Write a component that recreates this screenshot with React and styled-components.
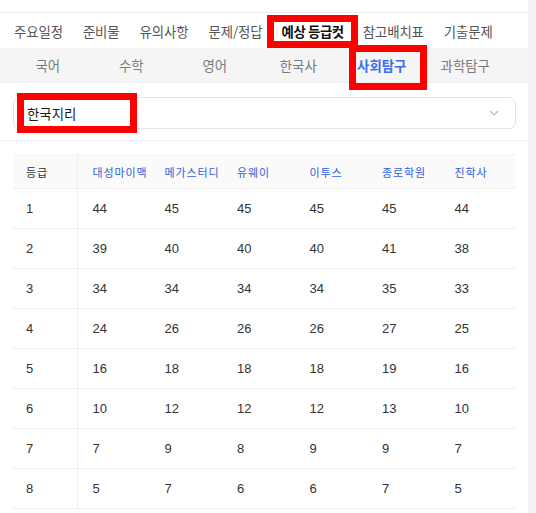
import React from 'react';
import styled, { createGlobalStyle } from 'styled-components';

const GlobalStyle = createGlobalStyle`
  html, body {
    margin: 0;
    padding: 0;
    background: #f1f2f6;
  }
  * {
    box-sizing: border-box;
  }
`;

const mainTabs = ['주요일정', '준비물', '유의사항', '문제/정답', '예상 등급컷', '참고배치표', '기출문제'];
const subTabs = ['국어', '수학', '영어', '한국사', '사회탐구', '과학탐구'];
const academies = ['대성마이맥', '메가스터디', '유웨이', '이투스', '종로학원', '진학사'];
const cuts = [
  [44, 45, 45, 45, 45, 44],
  [39, 40, 40, 40, 41, 38],
  [34, 34, 34, 34, 35, 33],
  [24, 26, 26, 26, 27, 25],
  [16, 18, 18, 18, 19, 16],
  [10, 12, 12, 12, 13, 10],
  [7, 9, 8, 9, 9, 7],
  [5, 7, 6, 6, 7, 5],
];

const App = () => {
  return (
    <Page>
      <GlobalStyle />
      <Main>
        <MainTabBar>
          {mainTabs.map((t) => (
            <MainTab key={t} $active={t === '예상 등급컷'}>
              {t}
              {t === '예상 등급컷' && <Mark $top={2} $bottom={0} $left={-5} $right={-5} />}
            </MainTab>
          ))}
        </MainTabBar>
        <SubTabBar>
          {subTabs.map((t) => (
            <SubTab key={t} $active={t === '사회탐구'}>
              <SubLabel>
                {t}
                {t === '사회탐구' && <Mark $top={-10} $bottom={-15} $left={-8} $right={-21} />}
              </SubLabel>
            </SubTab>
          ))}
        </SubTabBar>
        <SelectArea>
          <Select>
            <SelectValue>
              한국지리
              <Mark $top={-10} $bottom={-10} $left={-10} $right={-61} />
            </SelectValue>
            <Chevron width="10" height="6" viewBox="0 0 10 6">
              <path d="M1 1l4 4 4-4" fill="none" stroke="#b8b8b8" strokeWidth="1.1" />
            </Chevron>
          </Select>
        </SelectArea>
        <TableArea>
          <Table>
            <colgroup>
              <col style={{ width: 64 }} />
              <col style={{ width: 72.5 }} />
              <col style={{ width: 72.5 }} />
              <col style={{ width: 72.5 }} />
              <col style={{ width: 72.5 }} />
              <col style={{ width: 72.5 }} />
              <col />
            </colgroup>
            <thead>
              <tr>
                <HeadCell $first>등급</HeadCell>
                {academies.map((a) => (
                  <HeadCell key={a}>{a}</HeadCell>
                ))}
              </tr>
            </thead>
            <tbody>
              {cuts.map((row, i) => (
                <tr key={i}>
                  <Cell $first>{i + 1}</Cell>
                  {row.map((v, j) => (
                    <Cell key={j}>{v}</Cell>
                  ))}
                </tr>
              ))}
            </tbody>
          </Table>
        </TableArea>
      </Main>
    </Page>
  );
};

const Page = styled.div`
  display: flex;
  min-height: 513px;
  background: #f1f2f6;
`;

const Main = styled.div`
  width: 528px;
  background: #ffffff;
  padding-top: 12px;
  font-family: 'Noto Sans CJK KR', 'Noto Sans', sans-serif;
`;

const MainTabBar = styled.div`
  display: flex;
  align-items: center;
  height: 36px;
  padding-left: 4px;
  border-top: 1px solid #ececec;
`;

const MainTab = styled.div`
  position: relative;
  display: flex;
  align-items: center;
  height: 100%;
  padding: 0 ${(p) => (p.$active ? 9 : 10)}px;
  font-size: 13.4px;
  font-weight: ${(p) => (p.$active ? 700 : 400)};
  letter-spacing: ${(p) => (p.$active ? '-0.4px' : '-0.1px')};
  color: ${(p) => (p.$active ? '#111111' : '#555555')};
  white-space: nowrap;
`;

const Mark = styled.span`
  position: absolute;
  top: ${(p) => p.$top}px;
  bottom: ${(p) => p.$bottom}px;
  left: ${(p) => p.$left}px;
  right: ${(p) => p.$right}px;
  border: 7px solid #ff0000;
  pointer-events: none;
`;

const SubTabBar = styled.div`
  display: grid;
  grid-template-columns: repeat(6, 83.5px);
  height: 35px;
  padding-left: 6px;
  background: #f5f5f5;
  border-bottom: 1px solid #ededed;
`;

const SubTab = styled.div`
  display: flex;
  align-items: center;
  justify-content: center;
  font-size: 13.4px;
  font-weight: ${(p) => (p.$active ? 700 : 400)};
  color: ${(p) => (p.$active ? '#3b6cf2' : '#7a7a7a')};
`;

const SubLabel = styled.span`
  position: relative;
`;

const SelectArea = styled.div`
  padding: 14px 12px 11px 13px;
  border-bottom: 1px solid #eeeeee;
`;

const Select = styled.div`
  display: flex;
  align-items: center;
  justify-content: space-between;
  height: 32px;
  padding: 0 16px 0 13px;
  border: 1px solid #e3e3e3;
  border-radius: 7px;
`;

const SelectValue = styled.span`
  position: relative;
  font-size: 13.4px;
  color: #1a1a1a;
`;

const Chevron = styled.svg`
  display: block;
`;

const TableArea = styled.div`
  padding: 13px 12px 0 13px;
`;

const Table = styled.table`
  width: 503px;
  table-layout: fixed;
  border-collapse: collapse;
`;

const HeadCell = styled.th`
  height: 34px;
  padding: 0 0 0 ${(p) => (p.$first ? 13 : 15)}px;
  text-align: left;
  font-size: 11px;
  font-weight: 400;
  letter-spacing: 0.9px;
  color: ${(p) => (p.$first ? '#333333' : '#2f5fe0')};
  background: #fafafa;
  border-top: 1px solid #f2f2f2;
  border-bottom: 1px solid #efefef;
  border-right: ${(p) => (p.$first ? '1px solid #efefef' : 'none')};
  white-space: nowrap;
`;

const Cell = styled.td`
  height: 40px;
  padding: 0 0 0 ${(p) => (p.$first ? 13 : 15)}px;
  font-family: 'Liberation Sans', Arial, sans-serif;
  font-size: 13px;
  color: #333333;
  border-bottom: 1px solid #efefef;
  border-right: ${(p) => (p.$first ? '1px solid #efefef' : 'none')};
`;

export default App;
